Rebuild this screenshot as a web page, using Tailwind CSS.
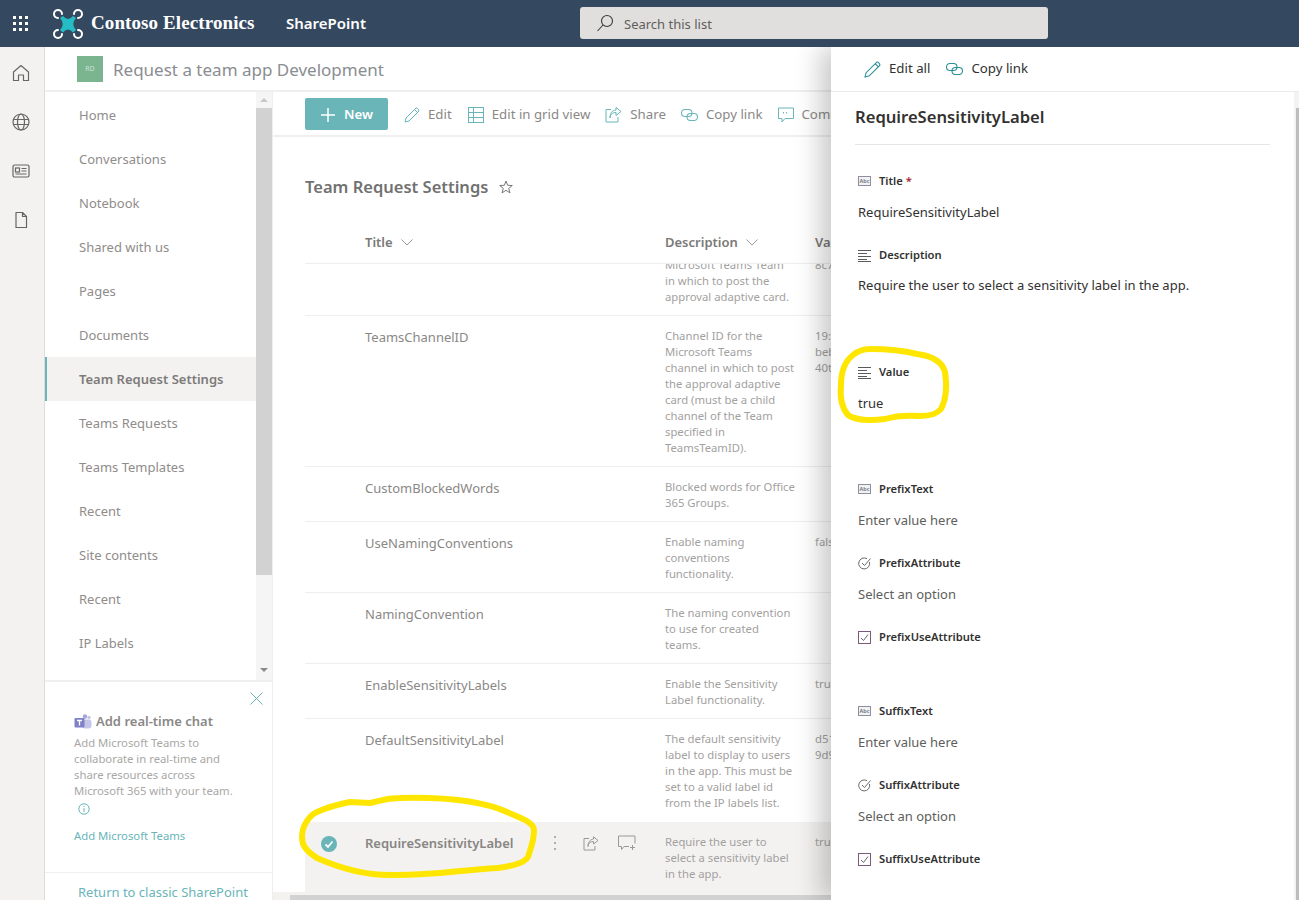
<!DOCTYPE html>
<html lang="en">
<head>
    <meta charset="UTF-8">
    <title>Team Request Settings</title>
    <script src="https://cdn.jsdelivr.net/npm/@tailwindcss/browser@4"></script>
</head>
<body class="font-['Noto_Sans',sans-serif] bg-white">
<div class="relative w-[1299px] h-[900px] overflow-hidden">
    <!-- Suite bar -->
    <header class="relative z-30 h-[47px] bg-[#34495f] flex items-center text-white">
        <div class="w-[42px] flex justify-center">
            <svg width="16" height="16" viewBox="0 0 16 16" fill="#fff"><rect x="0" y="0" width="3" height="3"/><rect x="6" y="0" width="3" height="3"/><rect x="12" y="0" width="3" height="3"/><rect x="0" y="6" width="3" height="3"/><rect x="6" y="6" width="3" height="3"/><rect x="12" y="6" width="3" height="3"/><rect x="0" y="12" width="3" height="3"/><rect x="6" y="12" width="3" height="3"/><rect x="12" y="12" width="3" height="3"/></svg>
        </div>
        <svg class="ml-[11px]" width="30" height="30" viewBox="0 0 30 30">
            <path d="M9 5 A4 4 0 1 0 5 9 M21 5 A4 4 0 1 1 25 9 M21 25 A4 4 0 1 0 25 21 M9 25 A4 4 0 1 1 5 21" fill="none" stroke="#fff" stroke-width="2" stroke-linecap="round"/>
            <path d="M7 9 L10 7 Q15 13 20 7 L23 9 Q17.500 15 23 21 L20 23.500 Q15 17.500 10 23.500 L7 21 Q12.500 15 7 9 Z" fill="#25bcc6"/>
        </svg>
        <span class="ml-[8px] w-[195px] font-['Liberation_Serif',serif] text-[19px] font-bold tracking-[0.1px]">Contoso Electronics</span>
        <span class="text-[15px] font-semibold w-[294px]">SharePoint</span>
        <div class="w-[468px] h-[32px] mb-[1px] bg-[#e1dfdd] rounded-[3px] flex items-center pl-[16px] text-[13px] text-[#605e5c]">
            <svg width="18" height="18" viewBox="0 0 18 18" fill="none" stroke="#3b3a39" stroke-width="1.1"><circle cx="11" cy="7" r="5.5"/><path d="M7 11 L1.5 17"/></svg>
            <span class="ml-[10px] mt-[3px]">Search this list</span>
        </div>
    </header>

    <div class="flex h-[853px]">
        <!-- App rail -->
        <aside class="w-[45px] shrink-0 bg-[#f3f2f1] border-r border-[#dcdcdc] flex flex-col items-center pt-[16px] gap-[29px] pr-[3px]">
            <svg width="20" height="20" viewBox="0 0 20 20" fill="none" stroke="#666" stroke-width="1.2"><path d="M2.5 9 L10 2.5 L17.500 9 V17.500 H12.500 V12 H7.500 V17.500 H2.500 Z" stroke-linejoin="round"/></svg>
            <svg width="20" height="20" viewBox="0 0 20 20" fill="none" stroke="#666" stroke-width="1.2"><circle cx="10" cy="10" r="8"/><ellipse cx="10" cy="10" rx="3.500" ry="8"/><path d="M2.500 7.500 H17.500 M2.500 12.500 H17.500"/></svg>
            <svg width="20" height="20" viewBox="0 0 20 20" fill="none" stroke="#666" stroke-width="1.200"><rect x="2" y="4" width="16" height="12" rx="1.500"/><rect x="4.500" y="7" width="4" height="4"/><path d="M10.500 7.500 H15.500 M10.500 10 H15.500 M4.500 13 H15.500"/></svg>
            <svg width="20" height="20" viewBox="0 0 20 20" fill="none" stroke="#666" stroke-width="1.200"><path d="M5 2.500 H11.500 L15.500 6.500 V17.500 H5 Z M11.500 2.500 V6.500 H15.500" stroke-linejoin="round"/></svg>
        </aside>

        <div class="flex-1 flex flex-col">
            <!-- Site header -->
            <div class="h-[45px] shrink-0 border-b-2 border-[#f0efee] flex items-start pl-[32px] pt-[9px]">
                <div class="w-[26px] h-[26px] bg-[#7ab58f] text-white/60 text-[7px] flex items-center justify-center">RD</div>
                <span class="ml-[10px] mt-[1px] text-[17px] leading-[26px] text-[#8a8d91]">Request a team app Development</span>
            </div>

            <div class="flex flex-1 min-h-0">
                <!-- Left nav -->
                <nav class="w-[228px] shrink-0 border-r border-[#eeeeee] flex flex-col">
                    <div class="h-[590px] shrink-0 border-b-2 border-[#f0efee] flex">
                        <ul class="w-[211px] text-[13px] text-[#8f8c8a] pt-[1px]">
                            <li class="h-[44px] flex items-center pl-[34px] pt-[2px]">Home</li>
                            <li class="h-[44px] flex items-center pl-[34px] pt-[2px]">Conversations</li>
                            <li class="h-[44px] flex items-center pl-[34px] pt-[2px]">Notebook</li>
                            <li class="h-[44px] flex items-center pl-[34px] pt-[2px]">Shared with us</li>
                            <li class="h-[44px] flex items-center pl-[34px] pt-[2px]">Pages</li>
                            <li class="h-[44px] flex items-center pl-[34px] pt-[2px]">Documents</li>
                            <li class="h-[44px] flex items-center pl-[32px] pt-[2px] border-l-2 border-[#69b5b8] bg-[#f3f2f1] font-semibold text-[#7d7b79]">Team Request Settings</li>
                            <li class="h-[44px] flex items-center pl-[34px] pt-[2px]">Teams Requests</li>
                            <li class="h-[44px] flex items-center pl-[34px] pt-[2px]">Teams Templates</li>
                            <li class="h-[44px] flex items-center pl-[34px] pt-[2px]">Recent</li>
                            <li class="h-[44px] flex items-center pl-[34px] pt-[2px]">Site contents</li>
                            <li class="h-[44px] flex items-center pl-[34px] pt-[2px]">Recent</li>
                            <li class="h-[44px] flex items-center pl-[34px] pt-[2px]">IP Labels</li>
                        </ul>
                        <div class="w-[16px] bg-[#f5f5f5] flex flex-col items-center">
                            <div class="h-[16px] flex items-center justify-center"><div class="w-0 h-0 border-x-[4px] border-x-transparent border-b-[4px] border-b-[#c8c8c8]"></div></div>
                            <div class="w-full h-[467px] bg-[#d2d2d2]"></div>
                            <div class="flex-1"></div>
                            <div class="h-[20px] flex items-center justify-center"><div class="w-0 h-0 border-x-[4px] border-x-transparent border-t-[4px] border-t-[#8a8a8a]"></div></div>
                        </div>
                    </div>
                    <!-- Teams card -->
                    <div class="relative h-[191px] shrink-0 border-b border-[#f0efee] pl-[29px] pt-[30px]">
                        <svg class="absolute right-[9px] top-[10px]" width="13" height="13" viewBox="0 0 13 13" stroke="#69b5b8" stroke-width="1"><path d="M0.500 0.500 L12.500 12.500 M12.500 0.500 L0.500 12.500"/></svg>
                        <div class="flex items-center h-[20px] text-[13px] font-semibold text-[#8a8886]">
                            <svg class="mr-[4px]" width="18" height="18" viewBox="0 0 18 18"><circle cx="11" cy="3.500" r="2.200" fill="#a6a6dc"/><circle cx="15" cy="4.500" r="1.700" fill="#c5c5ea"/><rect x="8" y="6.500" width="9.500" height="9" rx="3" fill="#c5c5ea"/><rect x="0.500" y="5" width="10" height="9.500" rx="1" fill="#8080c8"/><path d="M3 7.500 H8 M5.500 7.500 V12.500" stroke="#fff" stroke-width="1.300" fill="none"/></svg>
                            Add real-time chat
                        </div>
                        <p class="text-[11.3px] leading-[16px] text-[#a9a7a5] mt-[3px] whitespace-nowrap">Add Microsoft Teams to<br>collaborate in real-time and<br>share resources across<br>Microsoft 365 with your team.</p>
                        <svg class="ml-[4px] mt-[4px]" width="12" height="12" viewBox="0 0 12 12" fill="none" stroke="#69b5b8"><circle cx="6" cy="6" r="5.200"/><path d="M6 5 V9 M6 3 V4"/></svg>
                        <p class="text-[11.3px] leading-[16px] text-[#69b5b8] mt-[13px]">Add Microsoft Teams</p>
                    </div>
                    <div class="pl-[33px] pt-[10px] text-[13px] text-[#69b5b8] whitespace-nowrap">Return to classic SharePoint</div>
                </nav>

                <!-- List content -->
                <main class="flex-1 min-w-0 flex flex-col overflow-hidden">
                    <div class="h-[45px] shrink-0 border-b-2 border-[#f0efee] flex items-start pl-[32px] pt-[6px] text-[13.25px] text-[#8a8886] whitespace-nowrap">
                        <div class="w-[83px] h-[32px] pt-[1px] bg-[#69b5b8] rounded-[2px] text-white font-semibold flex items-center pl-[15px]">
                            <svg width="16" height="16" viewBox="0 0 16 16" stroke="#fff" stroke-width="1.500"><path d="M8 1 V15 M1 8 H15"/></svg>
                            <span class="ml-[8px]">New</span>
                        </div>
                        <div class="h-[32px] pt-[2px] flex items-center ml-[16px]">
                            <svg width="16" height="16" viewBox="0 0 16 16" fill="none" stroke="#69b5b8"><path d="M1 15 L2 11 L12 1 C13 0.500 15 2.500 15 4 L5 14 Z M10.500 2.500 L13.500 5.500"/></svg>
                            <span class="ml-[8px]">Edit</span>
                            <svg class="ml-[16px]" width="16" height="16" viewBox="0 0 16 16" fill="none" stroke="#69b5b8"><rect x="0.500" y="0.500" width="15" height="15"/><path d="M0.500 5.500 H15.500 M0.500 10.500 H15.500 M5.500 0.500 V15.500"/></svg>
                            <span class="ml-[8px]">Edit in grid view</span>
                            <svg class="ml-[15px]" width="17" height="16" viewBox="0 0 17 16" fill="none" stroke="#69b5b8"><path d="M6 2.500 H1 V15 H13 V10 M5 11 C5 7 8 5.500 11 5.500 V8.500 L16 4.500 L11 0.500 V3 C7 3.500 5 6 5 11 Z"/></svg>
                            <span class="ml-[8px]">Share</span>
                            <svg class="ml-[15px]" width="17" height="12" viewBox="0 0 17 12" fill="none" stroke="#69b5b8" stroke-width="1.100"><rect x="0.500" y="0.500" width="10.500" height="7" rx="3.500"/><rect x="6" y="4.500" width="10.500" height="7" rx="3.500"/></svg>
                            <span class="ml-[8px]">Copy link</span>
                            <svg class="ml-[15px]" width="16" height="16" viewBox="0 0 16 16" fill="none" stroke="#69b5b8"><path d="M0.500 1 H15.500 V11.500 H7 L4 15 V11.500 H0.500 Z M5.500 5 V6.500 M8.500 5 V6.500"/></svg>
                            <span class="ml-[8px]">Comment</span>
                        </div>
                    </div>

                    <div class="pl-[32px] flex flex-col flex-1 min-h-0">
                        <div class="h-[38px] mt-[31px] flex items-center text-[16.5px] font-semibold text-[#717171] whitespace-nowrap">
                            Team Request Settings
                            <svg class="ml-[11px]" width="14" height="14" viewBox="0 0 14 14" fill="none" stroke="#777"><path d="M7 1 L8.700 5.300 L13.300 5.500 L9.700 8.400 L11 12.900 L7 10.300 L3 12.900 L4.300 8.400 L0.700 5.500 L5.300 5.300 Z"/></svg>
                        </div>
                        <!-- Column headers -->
                        <div class="mt-[18px] h-[40px] border-b border-[#eeeeee] grid grid-cols-[60px_300px_150px_1fr] text-[13px] font-semibold text-[#7b7977] items-start pt-[9px] whitespace-nowrap">
                            <div></div>
                            <div class="flex items-center">Title<svg class="ml-[8px]" width="12" height="7" viewBox="0 0 12 7" fill="none" stroke="#999"><path d="M0.500 0.500 L6 6 L11.500 0.500"/></svg></div>
                            <div class="flex items-center">Description<svg class="ml-[8px]" width="12" height="7" viewBox="0 0 12 7" fill="none" stroke="#999"><path d="M0.500 0.500 L6 6 L11.500 0.500"/></svg></div>
                            <div>Value</div>
                        </div>
                        <!-- Rows -->
                        <div class="text-[11.3px] leading-[16px] text-[#a3a1a0]">
                            <div class="h-[52px] overflow-hidden border-b border-[#eeeeee] grid grid-cols-[60px_300px_150px_1fr] items-start whitespace-nowrap">
                                <div></div><div></div>
                                <div class="-mt-[7px]">Microsoft Teams Team<br>in which to post the<br>approval adaptive card.</div>
                                <div class="-mt-[7px]">8c7a1f20-90bd-4b6e</div>
                            </div>
                            <div class="h-[151px] border-b border-[#eeeeee] grid grid-cols-[60px_300px_150px_1fr] items-start pt-[12px] whitespace-nowrap">
                                <div></div>
                                <div class="text-[13px] leading-[20px] text-[#8a8886] -mt-[1px]">TeamsChannelID</div>
                                <div>Channel ID for the<br>Microsoft Teams<br>channel in which to post<br>the approval adaptive<br>card (must be a child<br>channel of the Team<br>specified in<br>TeamsTeamID).</div>
                                <div>19:aa91f3e0<br>bebc74a1<br>40tacv2</div>
                            </div>
                            <div class="h-[55px] border-b border-[#eeeeee] grid grid-cols-[60px_300px_150px_1fr] items-start pt-[12px] whitespace-nowrap">
                                <div></div>
                                <div class="text-[13px] leading-[20px] text-[#8a8886] -mt-[1px]">CustomBlockedWords</div>
                                <div>Blocked words for Office<br>365 Groups.</div>
                                <div></div>
                            </div>
                            <div class="h-[71px] border-b border-[#eeeeee] grid grid-cols-[60px_300px_150px_1fr] items-start pt-[12px] whitespace-nowrap">
                                <div></div>
                                <div class="text-[13px] leading-[20px] text-[#8a8886] -mt-[1px]">UseNamingConventions</div>
                                <div>Enable naming<br>conventions<br>functionality.</div>
                                <div>false</div>
                            </div>
                            <div class="h-[71px] border-b border-[#eeeeee] grid grid-cols-[60px_300px_150px_1fr] items-start pt-[12px] whitespace-nowrap">
                                <div></div>
                                <div class="text-[13px] leading-[20px] text-[#8a8886] -mt-[1px]">NamingConvention</div>
                                <div>The naming convention<br>to use for created<br>teams.</div>
                                <div></div>
                            </div>
                            <div class="h-[55px] border-b border-[#eeeeee] grid grid-cols-[60px_300px_150px_1fr] items-start pt-[12px] whitespace-nowrap">
                                <div></div>
                                <div class="text-[13px] leading-[20px] text-[#8a8886] -mt-[1px]">EnableSensitivityLabels</div>
                                <div>Enable the Sensitivity<br>Label functionality.</div>
                                <div>true</div>
                            </div>
                            <div class="h-[103px] grid grid-cols-[60px_300px_150px_1fr] items-start pt-[12px] whitespace-nowrap">
                                <div></div>
                                <div class="text-[13px] leading-[20px] text-[#8a8886] -mt-[1px]">DefaultSensitivityLabel</div>
                                <div>The default sensitivity<br>label to display to users<br>in the app. This must be<br>set to a valid label id<br>from the IP labels list.</div>
                                <div>d51f0a7c<br>9d9e13b2</div>
                            </div>
                            <div class="h-[70px] bg-[#f3f2f1] grid grid-cols-[60px_190px_110px_150px_1fr] items-start pt-[12px] whitespace-nowrap">
                                <div class="flex justify-center pr-[12px] pt-[1px]">
                                    <svg class="mt-[1px]" width="16" height="16" viewBox="0 0 16 16"><circle cx="8" cy="8" r="8" fill="#69b5b8"/><path d="M4.500 8.500 L7 11 L11.500 5.500" fill="none" stroke="#fff" stroke-width="1.800"/></svg>
                                </div>
                                <div class="text-[13px] leading-[20px] font-semibold text-[#888583] -mt-[1px]">RequireSensitivityLabel</div>
                                <div class="flex items-center -ml-[2px] pt-[1px]">
                                    <svg width="4" height="16" viewBox="0 0 4 16" fill="#9a9896"><circle cx="2" cy="2" r="1"/><circle cx="2" cy="8" r="1"/><circle cx="2" cy="14" r="1"/></svg>
                                    <svg class="ml-[26px]" width="16" height="15" viewBox="0 0 16 15" fill="none" stroke="#9a9896"><path d="M6 2.500 H1 V14 H12 V10 M5 10.500 C5 7 7.500 5.500 10.500 5.500 V8 L15 4.500 L10.500 0.800 V3 C7 3.500 5 6 5 10.500 Z"/></svg>
                                    <svg class="ml-[19px]" width="18" height="16" viewBox="0 0 18 16" fill="none" stroke="#9a9896"><path d="M11 11.500 H6 L3.500 14.500 V11.500 H0.500 V1 H17 V8.500 M14.500 10 V15 M12 12.500 H17"/></svg>
                                </div>
                                <div>Require the user to<br>select a sensitivity label<br>in the app.</div>
                                <div>true</div>
                            </div>
                        </div>
                        <div class="flex-1"></div>
                    </div>
                    <!-- Horizontal scrollbar -->
                    <div class="h-[8px] shrink-0 bg-[#f3f2f1] pl-[17px] pt-[3px] flex">
                        <div class="flex-1 bg-[#d2d2d2]"></div>
                    </div>
                </main>
            </div>
        </div>
    </div>

    <!-- Item details panel -->
    <section class="absolute z-20 top-[47px] left-[831px] bottom-0 right-0 bg-white shadow-[-10px_0_25px_rgba(0,0,0,0.22)] flex flex-col text-[#323130]">
        <div class="h-[45px] shrink-0 border-b border-[#edebe9] flex items-center pl-[33px] text-[13.25px] text-[#323130]">
            <svg width="17" height="17" viewBox="0 0 16 16" fill="none" stroke="#2a8f96"><path d="M1 15 L2 11 L12 1 C13 0.500 15 2.500 15 4 L5 14 Z M10.500 2.500 L13.500 5.500"/></svg>
            <span class="ml-[8px]">Edit all</span>
            <svg class="ml-[16px]" width="17" height="12" viewBox="0 0 17 12" fill="none" stroke="#2a8f96" stroke-width="1.100"><rect x="0.500" y="0.500" width="10.500" height="7" rx="3.500"/><rect x="6" y="4.500" width="10.500" height="7" rx="3.500"/></svg>
            <span class="ml-[8px]">Copy link</span>
        </div>
        <div class="flex flex-1 min-h-0">
            <div class="flex-1 pl-[24px] pr-[24px] overflow-hidden">
                <h2 class="h-[53px] border-b border-[#e6e6e6] text-[16.6px] leading-[50px] font-semibold text-[#323130]">RequireSensitivityLabel</h2>
                <div class="pl-[3px] text-[13px] text-[#323130]">
                    <div class="h-[57px] pt-[26px]"><div class="flex items-center h-[20px] text-[11.2px] font-semibold">
                        <svg width="13" height="10" viewBox="0 0 13 10" class="mr-[8px]"><rect x="0.500" y="0.500" width="12" height="9" fill="#f2f2f2" stroke="#8e8e9e"/><text x="6.500" y="7" font-size="5.500" text-anchor="middle" fill="#6e6e7e">Abc</text></svg>Title <span class="ml-[3px] text-[#a4262c]">*</span></div></div>
                    <div class="h-[43px]"><span class="leading-[20px] block">RequireSensitivityLabel</span></div>
                    <div class="h-[30px]"><div class="flex items-center h-[20px] text-[11.2px] font-semibold">
                        <svg width="13" height="13" viewBox="0 0 13 13" class="mr-[8px]" stroke="#5a5a5a"><path d="M0 1.500 H13 M0 4.500 H9 M0 7.500 H13 M0 10.500 H9 M0 12.500 H13"/></svg>Description</div></div>
                    <div class="h-[87px]"><span class="leading-[20px] block">Require the user to select a sensitivity label in the app.</span></div>
                    <div class="h-[31px]"><div class="flex items-center h-[20px] text-[11.2px] font-semibold">
                        <svg width="13" height="13" viewBox="0 0 13 13" class="mr-[8px]" stroke="#5a5a5a"><path d="M0 1.500 H13 M0 4.500 H9 M0 7.500 H13 M0 10.500 H9 M0 12.500 H13"/></svg>Value</div></div>
                    <div class="h-[86px]"><span class="leading-[20px] block">true</span></div>
                    <div class="h-[31px]"><div class="flex items-center h-[20px] text-[11.2px] font-semibold">
                        <svg width="13" height="10" viewBox="0 0 13 10" class="mr-[8px]"><rect x="0.500" y="0.500" width="12" height="9" fill="#f2f2f2" stroke="#8e8e9e"/><text x="6.500" y="7" font-size="5.500" text-anchor="middle" fill="#6e6e7e">Abc</text></svg>PrefixText</div></div>
                    <div class="h-[43px]"><span class="leading-[20px] block text-[#605e5c]">Enter value here</span></div>
                    <div class="h-[31px]"><div class="flex items-center h-[20px] text-[11.2px] font-semibold">
                        <svg width="13" height="13" viewBox="0 0 13 13" class="mr-[8px]" fill="none" stroke="#6a6a6a"><path d="M11.500 5 A5.500 5.500 0 1 1 9 1.700 M4 6 L6.500 8.500 L12.500 1.500"/></svg>PrefixAttribute</div></div>
                    <div class="h-[43px]"><span class="leading-[20px] block text-[#605e5c]">Select an option</span></div>
                    <div class="h-[74px]"><div class="flex items-center h-[20px] text-[11.2px] font-semibold">
                        <svg width="13" height="13" viewBox="0 0 13 13" class="mr-[8px]" fill="none"><rect x="0.500" y="0.500" width="12" height="12" stroke="#7a5a78"/><path d="M3 7 L5.500 9.500 L10 3.500" stroke="#666"/></svg>PrefixUseAttribute</div></div>
                    <div class="h-[31px]"><div class="flex items-center h-[20px] text-[11.2px] font-semibold">
                        <svg width="13" height="10" viewBox="0 0 13 10" class="mr-[8px]"><rect x="0.500" y="0.500" width="12" height="9" fill="#f2f2f2" stroke="#8e8e9e"/><text x="6.500" y="7" font-size="5.500" text-anchor="middle" fill="#6e6e7e">Abc</text></svg>SuffixText</div></div>
                    <div class="h-[43px]"><span class="leading-[20px] block text-[#605e5c]">Enter value here</span></div>
                    <div class="h-[31px]"><div class="flex items-center h-[20px] text-[11.2px] font-semibold">
                        <svg width="13" height="13" viewBox="0 0 13 13" class="mr-[8px]" fill="none" stroke="#6a6a6a"><path d="M11.500 5 A5.500 5.500 0 1 1 9 1.700 M4 6 L6.500 8.500 L12.500 1.500"/></svg>SuffixAttribute</div></div>
                    <div class="h-[43px]"><span class="leading-[20px] block text-[#605e5c]">Select an option</span></div>
                    <div class="h-[30px]"><div class="flex items-center h-[20px] text-[11.2px] font-semibold">
                        <svg width="13" height="13" viewBox="0 0 13 13" class="mr-[8px]" fill="none"><rect x="0.500" y="0.500" width="12" height="12" stroke="#7a5a78"/><path d="M3 7 L5.500 9.500 L10 3.500" stroke="#666"/></svg>SuffixUseAttribute</div></div>
                </div>
            </div>
            <div class="w-[5px] shrink-0 bg-[#f3f3f3] flex flex-col items-end">
                <div class="h-[16px]"></div>
                <div class="flex-1 w-[3px] bg-[#bdbdbd]"></div>
            </div>
        </div>
    </section>

    <!-- Yellow annotations -->
    <svg class="absolute inset-0 z-40 pointer-events-none" width="1299" height="900" viewBox="0 0 1299 900" fill="none" stroke="#ffe600" stroke-width="6" stroke-linecap="round">
        <path d="M350 802 L370 803 C 380 801 385 798 400 798 C 440 797 480 800 507 812 C 520 818 534 822 534 830 C 534 842 530 850 528 857 C 523 865 505 867 497 868 C 460 870 430 876 390 875 C 360 875 335 866 317 858 C 305 850 302 845 302 837 C 302 825 310 815 317 812 C 330 806 340 804 350 802 Z"/>
        <path d="M870 349 C 885 349 905 351 917 354 C 932 356 942 361 945 372 C 947 385 947 398 941 409 C 937 414 930 416 920 416 C 905 415 895 416 885 419 C 870 421 855 420 848 415 C 841 407 840 395 841 385 C 841 372 844 362 853 355 C 858 351 864 349 870 349 Z"/>
    </svg>
</div>
</body>
</html>
